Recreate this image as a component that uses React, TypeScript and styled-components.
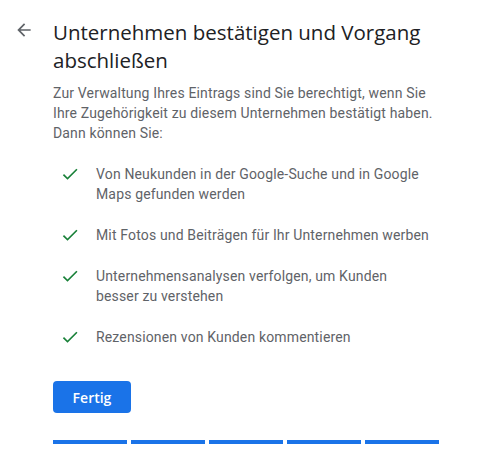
import React from 'react';
import styled, { createGlobalStyle } from 'styled-components';

const GlobalStyle = createGlobalStyle`
    body {
        margin: 0;
        background: #ffffff;
        font-family: Roboto, 'Liberation Sans', sans-serif;
    }
`;

const Page = styled.div`
    display: flex;
    align-items: flex-start;
    padding: 18px 0 0 14px;
`;

const BackButton = styled.button`
    display: flex;
    align-items: center;
    justify-content: center;
    width: 20px;
    height: 20px;
    margin-top: 2px;
    padding: 0;
    border: none;
    background: none;
    cursor: pointer;
`;

const Content = styled.div`
    display: flex;
    flex-direction: column;
    width: 386px;
    margin-left: 19px;
`;

const Title = styled.h1`
    margin: 0;
    font-family: 'Open Sans', sans-serif;
    font-size: 20.5px;
    font-weight: 400;
    line-height: 28px;
    color: #202124;
`;

const Intro = styled.p`
    margin: 9px 0 0;
    font-size: 14px;
    line-height: 20px;
    letter-spacing: 0.15px;
    color: #5f6368;
`;

const Benefits = styled.ul`
    display: flex;
    flex-direction: column;
    gap: 21px;
    margin: 21px 0 0;
    padding: 0;
    list-style: none;
`;

const Benefit = styled.li`
    display: flex;
    align-items: flex-start;
    gap: 16px;
    padding: 0 8px 0 7px;
    font-size: 14px;
    line-height: 20px;
    letter-spacing: 0.15px;
    color: #5f6368;
`;

const CheckIcon = styled.svg`
    flex: none;
    width: 20px;
    height: 20px;
`;

const DoneButton = styled.button`
    align-self: flex-start;
    width: 78px;
    height: 32px;
    margin-top: 34px;
    border: none;
    border-radius: 4px;
    background: #1a73e8;
    color: #ffffff;
    font-family: 'Open Sans', sans-serif;
    font-size: 14px;
    font-weight: 600;
    cursor: pointer;
`;

const Progress = styled.div`
    display: grid;
    grid-template-columns: repeat(5, 1fr);
    gap: 4px;
    margin-top: 27px;
`;

const Step = styled.div<{ done?: boolean }>`
    height: 4px;
    background: ${props => (props.done ? '#1a73e8' : '#dadce0')};
`;

const benefits = [
    'Von Neukunden in der Google-Suche und in Google Maps gefunden werden',
    'Mit Fotos und Beiträgen für Ihr Unternehmen werben',
    'Unternehmensanalysen verfolgen, um Kunden besser zu verstehen',
    'Rezensionen von Kunden kommentieren',
];

const App = () => (
    <>
        <GlobalStyle />
        <Page>
            <BackButton aria-label="Zurück">
                <svg width="20" height="20" viewBox="0 0 24 24" fill="#5f6368">
                    <path d="M20 11H7.83l5.59-5.59L12 4l-8 8 8 8 1.41-1.41L7.83 13H20v-2z" />
                </svg>
            </BackButton>
            <Content>
                <Title>Unternehmen bestätigen und Vorgang abschließen</Title>
                <Intro>
                    Zur Verwaltung Ihres Eintrags sind Sie berechtigt, wenn Sie Ihre Zugehörigkeit
                    zu diesem Unternehmen bestätigt haben. Dann können Sie:
                </Intro>
                <Benefits>
                    {benefits.map(text => (
                        <Benefit key={text}>
                            <CheckIcon viewBox="0 0 24 24" fill="#188038">
                                <path d="M9 16.17L4.83 12l-1.42 1.41L9 19 21 7l-1.41-1.41z" />
                            </CheckIcon>
                            <span>{text}</span>
                        </Benefit>
                    ))}
                </Benefits>
                <DoneButton>Fertig</DoneButton>
                <Progress>
                    {[0, 1, 2, 3, 4].map(i => (
                        <Step key={i} done />
                    ))}
                </Progress>
            </Content>
        </Page>
    </>
);

export default App;
